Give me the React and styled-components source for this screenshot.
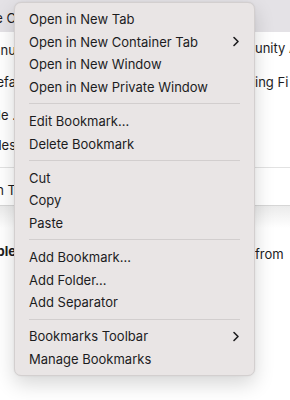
import React from "react";
import styled, { createGlobalStyle } from "styled-components";

const GlobalStyle = createGlobalStyle`
  html, body {
    margin: 0;
    padding: 0;
    background: #ffffff;
    font-family: Inter, "Noto Sans", sans-serif;
    -webkit-font-smoothing: antialiased;
  }
`;

const Page = styled.div`
  position: relative;
  width: 290px;
  height: 400px;
  overflow: hidden;
  background: #ffffff;
  color: #1c1c1e;
  font-size: 13px;
  line-height: 16px;
`;

const Line = styled.div`
  height: ${(p) => p.h}px;
  padding-top: ${(p) => p.top}px;
  display: flex;
  align-items: flex-start;
  justify-content: space-between;
  box-sizing: border-box;
  background: ${(p) => (p.bar ? "#e4e2e6" : "transparent")};
  font-weight: ${(p) => (p.bold ? 700 : 400)};
  border-bottom: ${(p) => (p.rule ? "1px solid #e2e2e2" : "none")};
`;

const Fade = styled.div`
  height: 22px;
  border-top: 1px solid #d6d6d6;
  background: linear-gradient(#ebebeb, #ffffff);
`;

const LeftCut = styled.span`
  width: 16px;
  overflow: hidden;
  display: flex;
  justify-content: flex-end;
  white-space: nowrap;
`;

const RightCut = styled.span`
  width: 35px;
  overflow: hidden;
  white-space: nowrap;
  font-weight: 400;
  margin-top: ${(p) => p.shift || 0}px;
`;

const Menu = styled.div`
  position: absolute;
  left: 14px;
  top: 2px;
  width: 241px;
  box-sizing: border-box;
  padding: 4.7px 0;
  background: #e9e5e5;
  border: 1px solid #d3cfcf;
  border-radius: 7px;
  box-shadow: 0 8px 20px rgba(0, 0, 0, 0.16), 0 0 2px rgba(0, 0, 0, 0.08);
`;

const Item = styled.div`
  height: 22.67px;
  display: flex;
  align-items: center;
  justify-content: space-between;
  padding: 0 14px;
  color: #1c1c1e;
  font-size: 13px;
  white-space: nowrap;
`;

const Separator = styled.div`
  height: 1px;
  margin: 5.17px 14px;
  background: #d2cece;
`;

const Chevron = () => (
  <svg width="8" height="11" viewBox="0 0 8 11">
    <polyline
      points="2,1.5 6,5.5 2,9.5"
      fill="none"
      stroke="#1c1c1e"
      strokeWidth="1.6"
      strokeLinecap="round"
      strokeLinejoin="round"
    />
  </svg>
);

const groups = [
  [
    { label: "Open in New Tab" },
    { label: "Open in New Container Tab", sub: true },
    { label: "Open in New Window" },
    { label: "Open in New Private Window" },
  ],
  [{ label: "Edit Bookmark…" }, { label: "Delete Bookmark" }],
  [{ label: "Cut" }, { label: "Copy" }, { label: "Paste" }],
  [{ label: "Add Bookmark…" }, { label: "Add Folder…" }, { label: "Add Separator" }],
  [{ label: "Bookmarks Toolbar", sub: true }, { label: "Manage Bookmarks" }],
];

export default function App() {
  return (
    <Page>
      <GlobalStyle />
      <Line h={32} top={10} bar>
        <LeftCut>Home C</LeftCut>
        <RightCut />
      </Line>
      <Line h={34} top={10}>
        <LeftCut>Manu</LeftCut>
        <RightCut shift={-2}>unity A</RightCut>
      </Line>
      <Line h={32} top={8}>
        <LeftCut>Defa</LeftCut>
        <RightCut>ing Fi</RightCut>
      </Line>
      <Line h={33} top={9}>
        <LeftCut>Title .</LeftCut>
        <RightCut />
      </Line>
      <Line h={37} top={6} rule>
        <LeftCut>Titles</LeftCut>
        <RightCut />
      </Line>
      <Line h={37} top={14}>
        <LeftCut>Open T</LeftCut>
        <RightCut />
      </Line>
      <Fade />
      <Line h={48} top={15} bold>
        <LeftCut>Table</LeftCut>
        <RightCut shift={3}>from</RightCut>
      </Line>

      <Menu>
        {groups.map((g, gi) => (
          <React.Fragment key={gi}>
            {gi > 0 && <Separator />}
            {g.map((it) => (
              <Item key={it.label}>
                <span>{it.label}</span>
                {it.sub && <Chevron />}
              </Item>
            ))}
          </React.Fragment>
        ))}
      </Menu>
    </Page>
  );
}
